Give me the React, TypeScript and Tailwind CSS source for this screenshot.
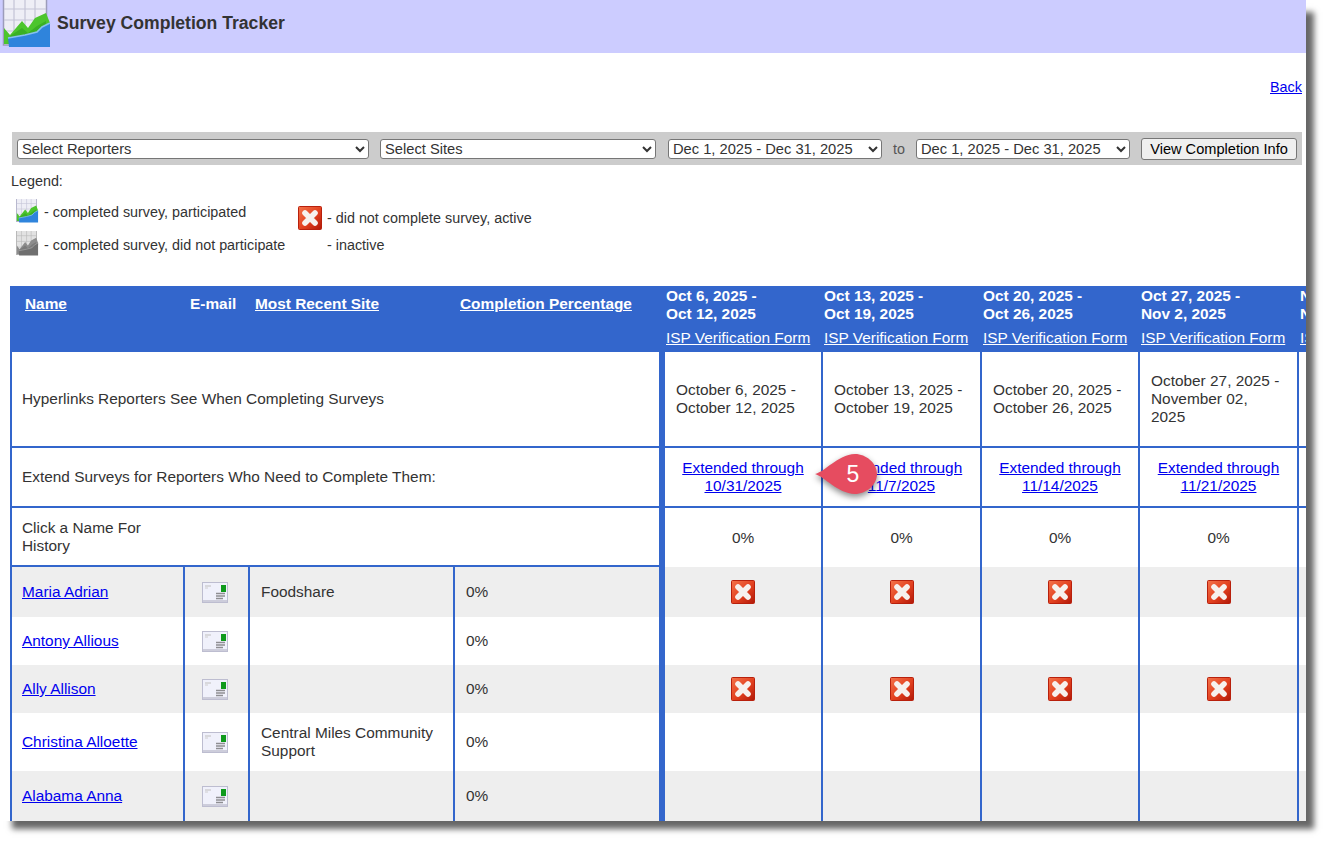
const ChartIcon = ({ width, height, gray = false }: { width: number; height: number; gray?: boolean }) => (
  <svg width={width} height={height} viewBox="0 0 52 48" preserveAspectRatio="none" className="shrink-0">
    <rect x="3.5" y="-1" width="43" height="46" fill={gray ? "#e2e2e2" : "#eeeef6"} stroke={gray ? "#a0a0a0" : "#9c9cba"} strokeWidth="1.5" />
    <path d="M4 9H46M4 20H46M4 31H46M14 0V44M25 0V44M35 0V44" stroke={gray ? "#b8b8b8" : "#c4c4d6"} strokeWidth="1.2" fill="none" />
    <path d="M4 28L10 35L22 21L28 28L35 18L46 13L50 23V27L30 38L10 44H4Z" fill={gray ? "#8c8c8c" : "#4cc52d"} />
    <path d="M10 36L22 28L28 33L37 26L46 21V25L30 35L10 41Z" fill={gray ? "#7a7a7a" : "#3ab024"} />
    <path d="M8 38L25 35L37 32L42 27L50 23V47H9Z" fill={gray ? "#6f6f6f" : "#2f84dc"} />
    <path d="M8 38L25 35L37 32L42 27L50 23" fill="none" stroke={gray ? "#a0a0a0" : "#86c0ef"} strokeWidth="1.6" />
  </svg>
);

const XIcon = () => (
  <svg width="24" height="24" viewBox="0 0 24 24" className="shrink-0">
    <defs>
      <linearGradient id="xfill" x1="0" y1="0" x2="1" y2="1">
        <stop offset="0" stopColor="#f4734a" />
        <stop offset="0.55" stopColor="#e2401f" />
        <stop offset="1" stopColor="#b01808" />
      </linearGradient>
    </defs>
    <rect x="0.5" y="0.5" width="23" height="23" rx="1" fill="url(#xfill)" stroke="#b8200c" />
    <path d="M7 7L17 17M17 7L7 17" stroke="#f6f1ee" strokeWidth="5.6" strokeLinecap="round" />
  </svg>
);

const MailIcon = () => (
  <svg width="26" height="21" viewBox="0 0 26 21" className="shrink-0">
    <rect x="0.5" y="0.5" width="25" height="20" fill="#f0f1fb" stroke="#bdbdd0" />
    <rect x="1" y="18" width="24" height="2" fill="#cdcddb" />
    <rect x="3" y="3" width="6" height="2" fill="#d8d8dc" />
    <rect x="3" y="5" width="3" height="2" fill="#dfdfe4" />
    <rect x="19" y="3" width="5" height="7" fill="#0f9a1c" />
    <path d="M14 11.5H23M14 14H23M14 16.5H21" stroke="#8e8e92" strokeWidth="1.4" />
  </svg>
);

const weeks = [
  { top: "Oct 6, 2025 -", bottom: "Oct 12, 2025", label: "October 6, 2025 - October 12, 2025", ext: "10/31/2025" },
  { top: "Oct 13, 2025 -", bottom: "Oct 19, 2025", label: "October 13, 2025 - October 19, 2025", ext: "11/7/2025" },
  { top: "Oct 20, 2025 -", bottom: "Oct 26, 2025", label: "October 20, 2025 - October 26, 2025", ext: "11/14/2025" },
  { top: "Oct 27, 2025 -", bottom: "Nov 2, 2025", label: "October 27, 2025 - November 02, 2025", ext: "11/21/2025" },
  { top: "Nov 3, 2025 -", bottom: "Nov 9, 2025", label: "November 3, 2025 - November 9, 2025", ext: "11/28/2025" },
];

const reporters = [
  { name: "Maria Adrian", site: "Foodshare", gray: true, missed: true, height: "h-[50px]" },
  { name: "Antony Allious", site: "", gray: false, missed: false, height: "h-[48px]" },
  { name: "Ally Allison", site: "", gray: true, missed: true, height: "h-[48px]" },
  { name: "Christina Alloette", site: "Central Miles Community Support", gray: false, missed: false, height: "h-[58px]" },
  { name: "Alabama Anna", site: "", gray: true, missed: false, height: "h-[50px]" },
];

const line = "border-[#3366cc]";
const field = "h-[20px] rounded-[3px] border border-[#767676] bg-white text-[14.7px]";

export default function App() {
  return (
    <div className="relative h-[844px] w-[1329px] overflow-hidden bg-white font-['Liberation_Sans',Arial,sans-serif] text-[14.35px] leading-[18px] text-[#333333]">
      <div className="h-[821px] w-[1306px] overflow-hidden bg-white shadow-[10px_10px_6px_-2px_rgba(0,0,0,0.6)]">
        {/* Header */}
        <div className="flex h-[53px] items-start bg-[#ccccff]">
          <ChartIcon width={52} height={48} />
          <h1 className="ml-[5px] mt-[12px] text-[17.6px] font-bold leading-[22px]">Survey Completion Tracker</h1>
        </div>

        <div className="mt-[25px] flex justify-end pr-[4px]">
          <a href="#" className="text-[14.4px] text-[#0000ee] underline">Back</a>
        </div>

        {/* Filters */}
        <div className="ml-[12px] mr-[4px] mt-[36px] flex h-[33px] items-center bg-[#cccccc] pl-[5px] pr-[5px]">
          <select className={`${field} w-[352px]`}>
            <option>Select Reporters</option>
          </select>
          <select className={`${field} ml-[11px] w-[276px]`}>
            <option>Select Sites</option>
          </select>
          <select className={`${field} ml-[12px] w-[214px]`}>
            <option>Dec 1, 2025 - Dec 31, 2025</option>
          </select>
          <span className="ml-[11px] w-[23px] text-[#555555]">to</span>
          <select className={`${field} w-[214px]`}>
            <option>Dec 1, 2025 - Dec 31, 2025</option>
          </select>
          <button className="ml-[11px] h-[22px] w-[156px] rounded-[3px] border border-[#767676] bg-[#efefef] text-[14.6px] text-black">View Completion Info</button>
        </div>

        {/* Legend */}
        <div className="ml-[11px] mt-[8px] h-[16px] leading-[16px]">Legend:</div>
        <div className="ml-[15px] mt-[9px] flex h-[88px] items-start">
          <div className="flex w-[283px] flex-col">
            <div className="flex h-[25px] items-center">
              <ChartIcon width={24} height={24} />
              <span className="ml-[5px] translate-y-[1px]">- completed survey, participated</span>
            </div>
            <div className="mt-[8px] flex h-[25px] items-center">
              <ChartIcon width={24} height={25} gray />
              <span className="ml-[5px] translate-y-[1px]">- completed survey, did not participate</span>
            </div>
          </div>
          <div className="flex flex-col">
            <div className="mt-[7px] flex h-[25px] items-center">
              <XIcon />
              <span className="ml-[5px]">- did not complete survey, active</span>
            </div>
            <div className="ml-[29px] mt-[3px] h-[25px] leading-[25px]">- inactive</div>
          </div>
        </div>

        {/* Table */}
        <table className="ml-[10px] w-[1447px] table-fixed border-separate border-spacing-0 text-[15.4px]">
          <colgroup>
            <col className="w-[175px]" />
            <col className="w-[65px]" />
            <col className="w-[205px]" />
            <col className="w-[210px]" />
            <col className="w-[158px]" />
            <col className="w-[159px]" />
            <col className="w-[158px]" />
            <col className="w-[159px]" />
            <col className="w-[158px]" />
          </colgroup>
          <thead>
            <tr className="h-[66px] bg-[#3366cc] align-top text-white">
              <th className="pl-[15px] pt-[9px] text-left font-bold underline">Name</th>
              <th className="pl-[5px] pt-[9px] text-left font-bold">E-mail</th>
              <th className="pl-[5px] pt-[9px] text-left font-bold underline">Most Recent Site</th>
              <th className="pl-[5px] pt-[9px] text-left font-bold whitespace-nowrap underline">Completion Percentage</th>
              {weeks.map((w) => (
                <th key={w.top} className="pl-[1px] pt-[1px] text-left font-bold whitespace-nowrap">
                  <div>{w.top}</div>
                  <div>{w.bottom}</div>
                  <div className="mt-[6px] font-normal underline">ISP Verification Form</div>
                </th>
              ))}
            </tr>
          </thead>
          <tbody>
            <tr className="h-[96px]">
              <td colSpan={4} className={`border-b-2 border-l-2 border-r-[6px] ${line} pl-[10px]`}>Hyperlinks Reporters See When Completing Surveys</td>
              {weeks.map((w) => (
                <td key={w.top} className={`border-b-2 border-r-2 ${line} pl-[11px] pr-[16px]`}>{w.label}</td>
              ))}
            </tr>
            <tr className="h-[60px]">
              <td colSpan={4} className={`border-b-2 border-l-2 border-r-[6px] ${line} pl-[10px]`}>Extend Surveys for Reporters Who Need to Complete Them:</td>
              {weeks.map((w) => (
                <td key={w.top} className={`border-b-2 border-r-2 ${line} text-center`}>
                  <a href="#" className="text-[#0000ee] underline">Extended through<br />{w.ext}</a>
                </td>
              ))}
            </tr>
            <tr className="h-[59px]">
              <td colSpan={4} className={`border-b-2 border-l-2 border-r-[6px] ${line} pl-[10px]`}>Click a Name For<br />History</td>
              {weeks.map((w) => (
                <td key={w.top} className={`border-r-2 ${line} text-center`}>0%</td>
              ))}
            </tr>
            {reporters.map((r) => (
              <tr key={r.name} className={`${r.height} ${r.gray ? "bg-[#eeeeee]" : "bg-white"}`}>
                <td className={`border-l-2 border-r-2 ${line} pl-[10px]`}>
                  <a href="#" className="text-[#0000ee] underline">{r.name}</a>
                </td>
                <td className={`border-r-2 ${line}`}>
                  <div className="flex justify-center pr-[3px]">
                    <MailIcon />
                  </div>
                </td>
                <td className={`border-r-2 ${line} pl-[11px] pr-[8px]`}>{r.site}</td>
                <td className={`border-r-[6px] ${line} pl-[11px]`}>0%</td>
                {weeks.map((w) => (
                  <td key={w.top} className={`border-r-2 ${line}`}>
                    {r.missed && (
                      <div className="flex justify-center">
                        <XIcon />
                      </div>
                    )}
                  </td>
                ))}
              </tr>
            ))}
          </tbody>
        </table>
      </div>

      {/* Step marker */}
      <div className="absolute left-[813px] top-[452px] h-[46px] w-[66px]">
        <svg width="66" height="46" viewBox="0 0 66 46" className="drop-shadow-[0_3px_3px_rgba(0,0,0,0.45)]">
          <path d="M2 22C12 20 24 3 42 2C53 2 64 11 64 22C64 33 53 42 42 42C24 41 12 25 2 22Z" fill="#e64c60" />
        </svg>
        <span className="absolute left-[32px] top-[9px] w-[16px] text-center text-[23px] leading-[26px] text-white">5</span>
      </div>
    </div>
  );
}
